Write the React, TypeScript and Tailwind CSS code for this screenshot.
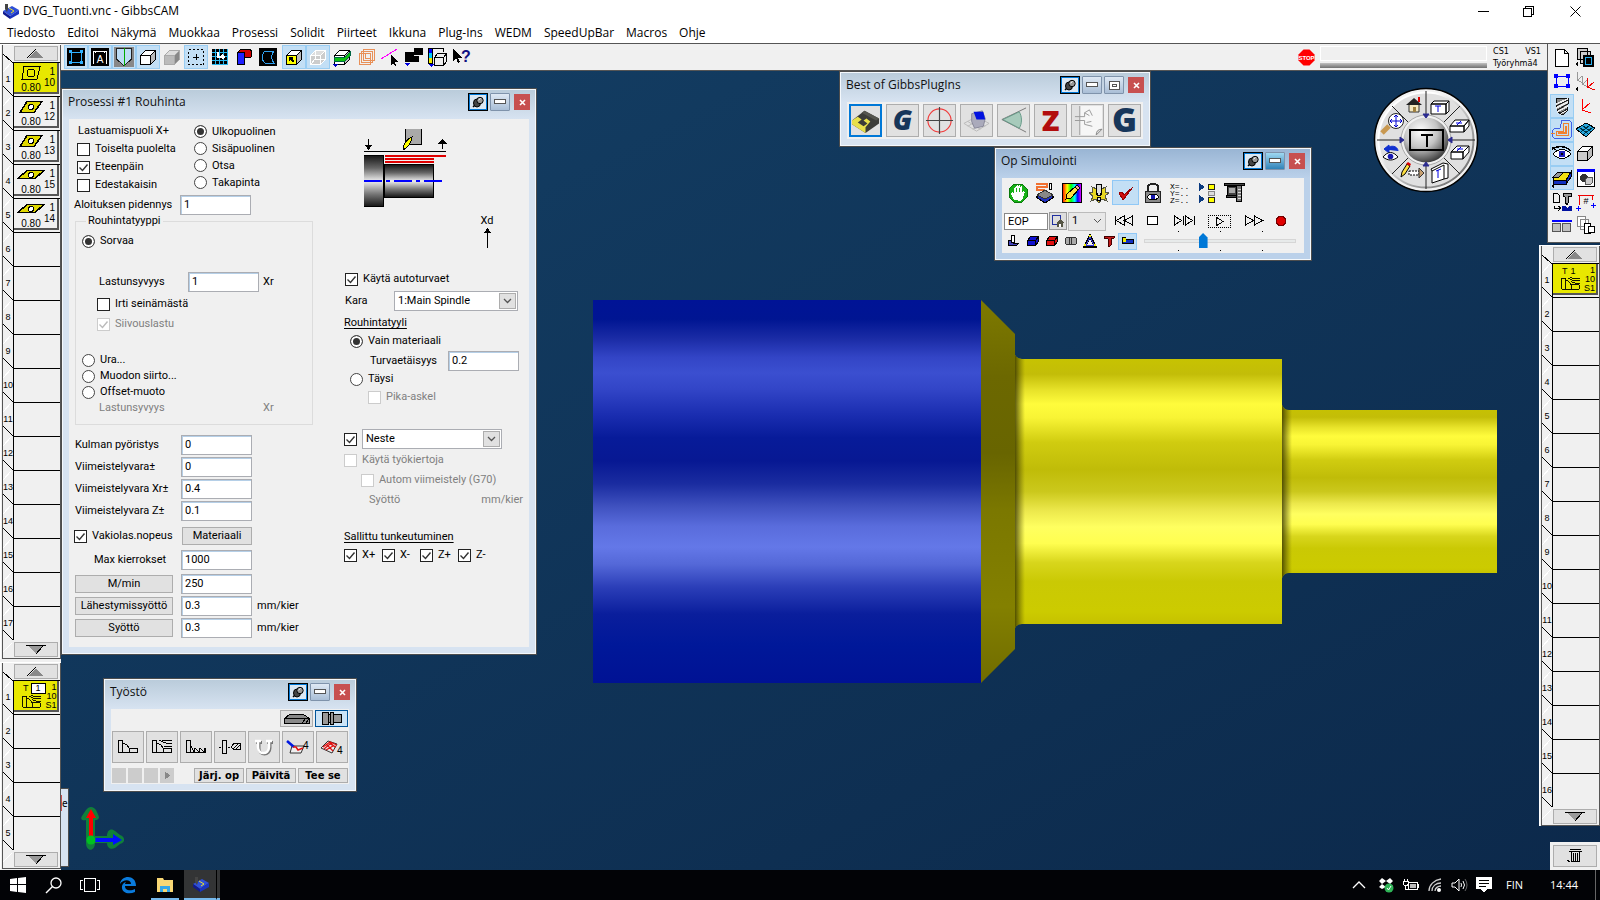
import { ReactNode } from "react";
import clsx from "clsx";

const MENU = [
  "Tiedosto", "Editoi", "Näkymä", "Muokkaa", "Prosessi", "Solidit", "Piirteet",
  "Ikkuna", "Plug-Ins", "WEDM", "SpeedUpBar", "Macros", "Ohje",
];

interface SvgProps {
  w?: number;
  h?: number;
  box?: string;
  smooth?: boolean;
  children: ReactNode;
}

function Svg({ w = 18, h = 18, box, smooth, children }: SvgProps) {
  return (
    <svg
      width={w}
      height={h}
      viewBox={box ?? `0 0 ${w} ${h}`}
      fill="none"
      shapeRendering={smooth ? "auto" : "crispEdges"}
      className="block shrink-0 overflow-visible"
      aria-hidden="true"
    >
      {children}
    </svg>
  );
}

/* ---------- shared drawings ---------- */

function Cube({ front = "#fff", top = "#fff", side = "#bbb", line = "#000" }) {
  return (
    <g stroke={line} strokeLinejoin="round">
      <path d="M1.500 7.500h10v9h-10z" fill={front} />
      <path d="M1.500 7.500l5-5h10l-5 5z" fill={top} />
      <path d="M11.500 7.500l5-5v9l-5 5z" fill={side} />
    </g>
  );
}

function RoughIcon({ w = 22, h = 14 }) {
  return (
    <Svg w={w} h={h} box="0 0 22 14">
      <path d="M1 .5h4V13H1zM5 3c3 0 5 2 6 5h9v5H5M11 8v5M8 1c3 0 3 2 6 2h7M10 0c2 0 3 1 5 1h6M11 4c2 2 3 2 10 2" stroke="#000" />
    </Svg>
  );
}

function GibbsLogo() {
  return (
    <Svg w={16} h={16} smooth>
      <path d="M0 8l9-5 7 4-9 6z" fill="#2f50d8" />
      <path d="M0 8l7 5v3l-7-5z" fill="#101a90" />
      <path d="M7 13l9-6v4l-9 5z" fill="#1a35c0" />
      <path d="M6 5l5 3-3 2" stroke="#e6e030" />
      <path d="M2 1h3v5l-1 3-2-3z" fill="#444" />
    </Svg>
  );
}

/* ---------- form controls ---------- */

interface TickProps {
  label: string;
  checked?: boolean;
  disabled?: boolean;
  className?: string;
}

function Tick({ label, checked, disabled, className }: TickProps) {
  return (
    <label className={clsx("flex items-center gap-[5px] whitespace-nowrap", disabled && "text-[#808080]", className)}>
      <span className="grid size-[13px] shrink-0">
        <input
          type="checkbox"
          defaultChecked={checked}
          disabled={disabled}
          className="peer col-start-1 row-start-1 size-[13px] appearance-none border border-[#222] bg-white disabled:border-[#ccc]"
        />
        <svg viewBox="0 0 13 13" className="pointer-events-none invisible col-start-1 row-start-1 size-[13px] peer-checked:visible" fill="none">
          <path d="M2.500 6.500l3 3 5-6" stroke={disabled ? "#bbb" : "#333"} strokeWidth="1.4" />
        </svg>
      </span>
      {label}
    </label>
  );
}

function Radio({ label, name, checked, className }: { label: string; name: string; checked?: boolean; className?: string }) {
  return (
    <label className={clsx("flex items-center gap-[5px] whitespace-nowrap", className)}>
      <input
        type="radio"
        name={name}
        defaultChecked={checked}
        className="size-[13px] shrink-0 appearance-none rounded-full border border-[#444] bg-white checked:bg-[#333] checked:shadow-[inset_0_0_0_2px_#fff]"
      />
      {label}
    </label>
  );
}

function Field({ id, value }: { id: string; value: string }) {
  return (
    <input
      id={id}
      defaultValue={value}
      className="h-5 w-[71px] shrink-0 border border-[#abadb3] bg-white px-[3px] pb-[2px] shadow-[inset_1px_1px_0_#b5cfe7]"
    />
  );
}

function Select({ label, value, className }: { label: string; value: string; className: string }) {
  return (
    <span className={clsx("grid h-5", className)}>
      <select aria-label={label} className="col-start-1 row-start-1 appearance-none border border-[#abadb3] bg-white pr-5 pl-[3px]">
        <option>{value}</option>
      </select>
      <span className="pointer-events-none col-start-1 row-start-1 mr-[2px] flex h-4 w-[17px] items-center justify-center self-center justify-self-end border border-[#adadad] bg-[#e1e1e1]">
        <Svg w={9} h={6} smooth><path d="M1 1l3.500 3.500L8 1" stroke="#555" strokeWidth="1.300" /></Svg>
      </span>
    </span>
  );
}

function PushButton({ children, className }: { children: ReactNode; className?: string }) {
  return (
    <button className={clsx("flex h-[18px] items-center justify-center border border-[#adadad] bg-[#e1e1e1]", className)}>
      {children}
    </button>
  );
}

/* ---------- floating windows ---------- */

interface WindowProps {
  title: string;
  active?: boolean;
  maximize?: boolean;
  className?: string;
  children: ReactNode;
}

function FloatingWindow({ title, active, maximize, className, children }: WindowProps) {
  const small = "flex h-[18px] w-5 items-center justify-center rounded-[1px] border border-[#7f93ab] bg-linear-to-b";
  const idle = "from-[#dfe9f4] to-[#a9bed6]";
  return (
    <section
      className={clsx(
        "absolute border border-[#4d4d4d] shadow-[inset_0_0_0_1px_#f4f8fc]",
        active ? "bg-linear-to-b from-[#98b4d3] to-[#bbd1ea] to-[30px]" : "bg-linear-to-b from-[#b9cbda] to-[#d7e3f1] to-[30px]",
        className
      )}
    >
      <header className="flex h-[30px] items-center gap-[2px] px-[6px] pb-1">
        <h2 className="flex-1 font-[Open_Sans,sans-serif] text-[12px] text-[#111]">{title}</h2>
        <button aria-label="Kiinnitä" className="flex h-[18px] w-5 items-center justify-center border border-black bg-[#dce8f4] shadow-[inset_0_0_0_1px_#0078d7]">
          <Svg w={12} h={12} smooth>
            <path d="M1 11l3-3" stroke="#000" strokeWidth="1.500" />
            <ellipse cx="5" cy="7" rx="3.500" ry="4" fill="#444" stroke="#000" />
            <circle cx="8" cy="4.500" r="3.200" fill="#999" stroke="#000" />
            <path d="M6.500 4l2-1.500" stroke="#fff" />
          </Svg>
        </button>
        <button aria-label="Pienennä" className={clsx(small, active ? "from-[#9ed8f1] to-[#2f83b8]" : idle)}>
          <Svg w={12} h={6}><path d="M.5.5h11v4H.5z" fill="#fff" stroke="#555" /></Svg>
        </button>
        {maximize && (
          <button aria-label="Suurenna" className={clsx(small, idle)}>
            <Svg w={11} h={9}><path d="M.5.5h10v8H.5z" fill="#fff" stroke="#555" /><path d="M3.500 3.500h4v2h-4z" stroke="#555" /></Svg>
          </button>
        )}
        <button aria-label="Sulje" className="ml-[2px] flex size-4 items-center justify-center bg-[#c75050]">
          <Svg w={7} h={7} smooth><path d="M1 1l5 5M6 1L1 6" stroke="#fff" strokeWidth="1.600" /></Svg>
        </button>
      </header>
      <div className="mx-[7px] mb-[7px] bg-[#f0f0f0]">{children}</div>
    </section>
  );
}

/* ---------- process dialog ---------- */

function TurningDiagram() {
  return (
    <Svg w={82} h={78}>
      <defs>
        <linearGradient id="steel" x1="0" y1="0" x2="0" y2="1">
          <stop offset="0" stopColor="#111" />
          <stop offset=".25" stopColor="#666" />
          <stop offset=".5" stopColor="#eee" />
          <stop offset=".75" stopColor="#777" />
          <stop offset="1" stopColor="#111" />
        </linearGradient>
      </defs>
      <path d="M41.500 0v15.500h16V0" fill="#a9a9a9" stroke="#000" />
      <path d="M39 21c0-6 4-11 9-13 0 4-4 11-9 13z" fill="#ff0" stroke="#000" />
      <path d="M0 22.500h82" stroke="#000" />
      <path d="M4.500 10v8M1.500 16.500h6L4.500 20zM78.500 20v-8M75.500 14h6l-3-3.500z" stroke="#000" fill="#000" />
      <path d="M0 26h20v52H0z" fill="url(#steel)" />
      <path d="M0 26.500h19.500v51H0" stroke="#000" />
      <path d="M20.500 35.500h49v33h-49z" fill="url(#steel)" stroke="#000" />
      <path d="M21 27h61M21 30h49M21 33h49" stroke="#e00000" strokeWidth="2" />
      <path d="M0 52h82" stroke="#00f" strokeWidth="2" strokeDasharray="18 4 4 4" />
    </Svg>
  );
}

const ALLOWANCES = [
  ["Kulman pyöristys", "0"],
  ["Viimeistelyvara±", "0"],
  ["Viimeistelyvara Xr±", "0.4"],
  ["Viimeistelyvara Z±", "0.1"],
];

const FEEDS = [
  ["M/min", "250", ""],
  ["Lähestymissyöttö", "0.3", "mm/kier"],
  ["Syöttö", "0.3", "mm/kier"],
];

function ProcessDialog() {
  return (
    <FloatingWindow title="Prosessi #1 Rouhinta" className="top-[17px] left-0 w-[476px]">
      <form className="flex h-[528px] font-[Roboto,sans-serif] text-[11px] leading-[14px] text-black">
        <div className="w-[275px] px-[5px] pt-[3px]">
          <div className="flex gap-2">
            <div className="w-[108px] pl-[3px]">
              <p className="h-[18px] pl-px leading-[18px]">Lastuamispuoli X+</p>
              <Tick label="Toiselta puolelta" className="h-[18px]" />
              <Tick label="Eteenpäin" checked className="h-[18px]" />
              <Tick label="Edestakaisin" className="h-[18px]" />
            </div>
            <div className="pt-px pl-1">
              <Radio name="side" label="Ulkopuolinen" checked className="h-[17px]" />
              <Radio name="side" label="Sisäpuolinen" className="h-[17px]" />
              <Radio name="side" label="Otsa" className="h-[17px]" />
              <Radio name="side" label="Takapinta" className="h-[17px]" />
            </div>
          </div>
          <div className="mt-px flex items-center">
            <label htmlFor="extension" className="w-[106px]">Aloituksen pidennys</label>
            <Field id="extension" value="1" />
          </div>

          <fieldset className="ml-px w-[238px] border border-[#dcdcdc] pb-2 pl-[6px]">
            <legend className="ml-1 h-3 px-[2px] leading-3">Rouhintatyyppi</legend>
            <Radio name="type" label="Sorvaa" checked className="mt-[6px] h-4" />
            <div className="mt-[23px] flex items-center pl-[17px]">
              <label htmlFor="depth" className="w-[89px]">Lastunsyvyys</label>
              <Field id="depth" value="1" />
              <span className="ml-1">Xr</span>
            </div>
            <Tick label="Irti seinämästä" className="mt-[2px] ml-[15px] h-5" />
            <Tick label="Siivouslastu" checked disabled className="ml-[15px] h-5" />
            <Radio name="type" label="Ura..." className="mt-[18px] h-4" />
            <Radio name="type" label="Muodon siirto..." className="h-4" />
            <Radio name="type" label="Offset-muoto" className="h-4" />
            <div className="flex h-4 items-center pl-[17px] text-[#808080]">
              <span className="w-[164px]">Lastunsyvyys</span>
              <span>Xr</span>
            </div>
          </fieldset>

          <div className="mt-[10px] flex flex-col gap-[2px] pl-px">
            {ALLOWANCES.map(([label, value]) => (
              <div key={label} className="flex items-center">
                <label htmlFor={label} className="w-[106px]">{label}</label>
                <Field id={label} value={value} />
              </div>
            ))}
          </div>
          <div className="mt-[6px] flex items-center justify-between pr-[87px]">
            <Tick label="Vakiolas.nopeus" checked />
            <PushButton className="w-[70px]">Materiaali</PushButton>
          </div>
          <div className="mt-[5px] flex items-center pl-5">
            <label htmlFor="maxrpm" className="w-[87px]">Max kierrokset</label>
            <Field id="maxrpm" value="1000" />
          </div>
          <div className="mt-1 flex flex-col gap-[2px] pl-px">
            {FEEDS.map(([label, value, unit]) => (
              <div key={label} className="flex items-center">
                <PushButton className="mr-2 w-[98px]">{label}</PushButton>
                <input
                  aria-label={label}
                  defaultValue={value}
                  className="h-5 w-[71px] border border-[#abadb3] bg-white px-[3px] pb-[2px] shadow-[inset_1px_1px_0_#b5cfe7]"
                />
                <span className="ml-[5px]">{unit}</span>
              </div>
            ))}
          </div>
        </div>

        <div className="w-[185px] pt-[10px]">
          <div className="pl-5"><TurningDiagram /></div>
          <div className="mt-[7px] flex flex-col items-center pl-[101px]">
            <span>Xd</span>
            <Svg w={9} h={20}><path d="M4.500 20V1M1.500 4.500h6L4.500 1z" stroke="#000" fill="#000" /></Svg>
          </div>
          <Tick label="Käytä autoturvaet" checked className="mt-6 h-[14px] pl-px" />
          <div className="mt-[5px] flex items-center pl-px">
            <span className="w-[49px]">Kara</span>
            <Select label="Kara" value="1:Main Spindle" className="w-[124px]" />
          </div>
          <p className="mt-[5px] h-4 underline underline-offset-2">Rouhintatyyli</p>
          <Radio name="style" label="Vain materiaali" checked className="mt-px ml-[6px] h-4" />
          <div className="mt-[2px] flex items-center pl-[26px]">
            <label htmlFor="clearance" className="w-[78px]">Turvaetäisyys</label>
            <Field id="clearance" value="0.2" />
          </div>
          <Radio name="style" label="Täysi" className="ml-[6px] h-4" />
          <Tick label="Pika-askel" disabled className="mt-[2px] ml-6 h-4" />
          <div className="mt-6 flex items-center">
            <span className="w-[13px] overflow-hidden"><Tick label="" checked /></span>
            <Select label="Neste" value="Neste" className="ml-[5px] w-[140px]" />
          </div>
          <Tick label="Käytä työkiertoja" disabled className="mt-px h-5" />
          <Tick label="Autom viimeistely (G70)" disabled className="ml-[17px] h-5" />
          <div className="flex h-5 items-center justify-between pr-[6px] pl-[25px] text-[#808080]">
            <span>Syöttö</span>
            <span>mm/kier</span>
          </div>
          <p className="mt-5 h-4 underline underline-offset-2">Sallittu tunkeutuminen</p>
          <div className="mt-px flex">
            <Tick label="X+" checked className="h-4 w-[38px]" />
            <Tick label="X-" checked className="h-4 w-[38px]" />
            <Tick label="Z+" checked className="h-4 w-[38px]" />
            <Tick label="Z-" checked className="h-4 w-[38px]" />
          </div>
        </div>
      </form>
    </FloatingWindow>
  );
}

/* ---------- plug-ins, simulation and machining windows ---------- */

const PLUGINS: { name: string; art: ReactNode }[] = [
  {
    name: "Plugin 1",
    art: (
      <>
        <path d="M1 15L14 5l15 8v5l-14 10L1 19z" fill="#3c3c38" />
        <path d="M1 15l6-4 4 3-4 3 6 4 4-3-4-3 3-2 4 3-5 6v6L1 19z" fill="#e8e04a" />
        <path d="M14 5l15 8-3 2-15-8z" fill="#55554e" />
      </>
    ),
  },
  { name: "G", art: <text x="15" y="25" textAnchor="middle" fontFamily="Open Sans" fontSize="29" fontWeight="800" fontStyle="italic" fill="#17365a">G</text> },
  { name: "Center", art: <><circle cx="15" cy="15" r="12" stroke="#f03c3c" strokeWidth="1.200" /><path d="M15 1v28M1 15h28" stroke="#444" strokeWidth="1.200" /></> },
  {
    name: "Grid cube",
    art: (
      <>
        <path d="M2 18l13-7 13 7-13 8zM6 16l13 8M11 13l13 8M24 16l-13 8M19 13L6 21" stroke="#bbb" />
        <path d="M10 8l11-3 3 8-2 8-9 2-3-7z" fill="#aab" stroke="#889" />
        <path d="M12 6h10l2 8h-9z" fill="#0010e0" />
      </>
    ),
  },
  { name: "Angle", art: <><path d="M28 2L3 14l25 13" stroke="#777" /><path d="M4 14l17-8c3 5 3 12 0 17z" fill="#a7cabb" stroke="#698" /></> },
  { name: "Z", art: <text x="15" y="26" textAnchor="middle" fontFamily="Open Sans" fontSize="30" fontWeight="800" fill="#b20d0d">Z</text> },
  {
    name: "Sheet",
    art: (
      <>
        <path d="M7 0h23v24l-6 6H7z" fill="#f6f6f6" />
        <path d="M7 0v30M2 11h10V7l5 3M2 15h10v4l8 2M12 7l5-3 3 6M14 17l5-1" stroke="#999" />
        <path d="M24 30c0-4 2-6 6-6z" fill="#ddd" stroke="#888" />
      </>
    ),
  },
  { name: "Gibbs", art: <text x="15" y="27" textAnchor="middle" fontFamily="Open Sans" fontSize="35" fontWeight="800" fill="#17365a">G</text> },
];

function PluginWindow() {
  return (
    <FloatingWindow title="Best of GibbsPlugIns" maximize className="top-0 left-[778px] w-[312px]">
      <div className="flex gap-1 px-[2px] py-[2px]">
        {PLUGINS.map(({ name, art }, i) => (
          <button
            key={name}
            aria-label={name}
            className={clsx(
              "flex size-[33px] items-center justify-center bg-[#e1e1e1]",
              i === 0 ? "border-2 border-[#0078d7]" : "border border-[#adadad]"
            )}
          >
            <Svg w={29} h={29} box="0 0 30 30" smooth>{art}</Svg>
          </button>
        ))}
      </div>
    </FloatingWindow>
  );
}

const SIM_TOOLS: ReactNode[] = [
  <>
    <path d="M6 1h8l5 5v8l-5 5H6l-5-5V6z" fill="#18b018" stroke="#0a7a0a" />
    <path d="M6 17l-3-6 1-2 2 2V5l1-1 1 1v4V3l1-1 1 1v6V3l1-1 1 1v6V4l1-1 1 1v7l1-3 2 1-2 6-2 3z" fill="#fff" />
    <path d="M8.500 5v4M11.500 5v4M14.500 5v4" stroke="#18b018" />
  </>,
  <>
    <path d="M1 1h11v3H2v3h8" stroke="#f07030" strokeWidth="1.500" />
    <path d="M14.500.5h2v6h-2z" fill="#fff" stroke="#000" />
    <path d="M1 14l9-4 9 4-9 6z" fill="#2030c0" stroke="#000" />
    <path d="M2 12l8-5 8 5-8 4z" fill="#888" stroke="#333" />
  </>,
  <>
    <defs>
      <linearGradient id="rainbow">
        <stop offset="0" stopColor="#f00" /><stop offset=".25" stopColor="#ff0" /><stop offset=".45" stopColor="#0f0" />
        <stop offset=".65" stopColor="#0ff" /><stop offset=".8" stopColor="#00f" /><stop offset="1" stopColor="#f0f" />
      </linearGradient>
    </defs>
    <path d="M.5.5h19v19H.5z" fill="url(#rainbow)" stroke="#000" />
    <path d="M4 16l1-5 9-8 3 3-8 9z" fill="#ffe040" stroke="#000" />
    <path d="M13 4l2-2 3 3-2 2z" fill="#f8a0a0" stroke="#000" />
  </>,
  <>
    <path d="M10 2l2 4 5-2-1 5 4 1-4 3 2 5-5-2-3 4-3-4-5 2 2-5-4-3 4-1-1-5 5 2z" fill="#e8d820" stroke="#554" />
    <path d="M7.500 1.500h5v8l-1 3h-3l-1-3zM8.500 14.500h3v3h-3z" fill="#ddd" stroke="#000" strokeWidth="1.500" />
  </>,
  <><path d="M3 10l4 7L17 4l-9 8-2-3z" fill="#d01010" stroke="#900" /></>,
  <>
    <path d="M5 8V4c0-4 10-4 10 0v4" stroke="#222" strokeWidth="2" />
    <path d="M2.500 8.500h15v11h-15z" fill="#888" stroke="#222" />
    <path d="M4 14c3-4 9-4 12 0-3 4-9 4-12 0z" fill="#fff" stroke="#000" /><circle cx="10" cy="14" r="2.200" fill="#1818b0" />
  </>,
  <>
    <g fontFamily="Liberation Mono" fontSize="8" fill="#000">
      <text x="0" y="6">X=..</text><text x="0" y="13">Y=..</text><text x="0" y="20">Z=..</text>
    </g>
  </>,
  <>
    <path d="M2 0l6 4-6 4zM2 12l6 4-6 4z" fill="#0a3a80" />
    <path d="M11.500 1.500h6v5h-6zM11.500 14.500h6v5h-6z" fill="#ff0" stroke="#222" />
    <path d="M11.500 8.500h6v4h-6z" fill="#ddd" stroke="#888" />
  </>,
  <>
    <path d="M0 .5h20v2H0zM3 3h10v9H3zM2 12h11v2H2z" fill="#444" stroke="#000" />
    <path d="M5 5h6v5H5z" fill="#aaa" />
    <path d="M12.500 2.500h5v16h-5z" fill="#777" stroke="#000" /><path d="M14 6h3M14 9h3M14 12h3M14 15h3" stroke="#ddd" />
  </>,
];

const SIM_PARTS: ReactNode[] = [
  <><path d="M0 6l5-1v3h6l-3 3-8-1z" fill="#44b" stroke="#000" /><path d="M3.500.5h3v7h-3z" fill="#fff" stroke="#000" /></>,
  <><path d="M.5 5.500l3-4h8v5l-3 4h-8z" fill="#1010d0" stroke="#000" /><path d="M.5 5.500h8l3-4M8.500 5.500v5" stroke="#000" /></>,
  <><path d="M.5 5.500l3-4h8v5l-3 4h-8z" fill="#e01010" stroke="#000" /><path d="M.5 5.500h8l3-4M8.500 5.500v5" stroke="#000" /></>,
  <><circle cx="4" cy="6" r="4" fill="#aaa" stroke="#333" /><circle cx="8" cy="6" r="4" fill="#aaa" stroke="#333" /><path d="M6.500 3v6" stroke="#333" /></>,
  <><path d="M6 1L1 11h10z" stroke="#000" strokeWidth="3" /><path d="M6 2L2 10h8z" stroke="#3838e0" /><path d="M5 0h2v2H5zM0 9h2v2H0zM10 9h2v2h-2z" fill="#ee0" /></>,
  <><path d="M1 1h10v2l-3 1v6l-2 2-1-2V4L1 3z" fill="#c01818" stroke="#400" /></>,
  <><path d="M.5 2.500h3v2h8v4H.5z" fill="#1030c0" stroke="#000" /><path d="M.5 2.500h3v4h-3z" fill="#ee0" /></>,
];

const TRANSPORT: { name: string; w: number; art: ReactNode }[] = [
  { name: "Alkuun", w: 20, art: <path d="M1.500 1v9M10 1v9L2 5.500zM18.500 1v9l-8-4.500z" /> },
  { name: "Seis", w: 12, art: <path d="M.5 1.500h10v8H.5z" fill="#fff" /> },
  { name: "Seuraava", w: 22, art: <path d="M1.500 1v9l7-4.500zM10.500 1v9M12.500 1v9l7-4.500zM21.500 1v9" /> },
];

function SpeedTicks() {
  return (
    <div className="flex gap-[41px] pl-[34px]">
      <i className="h-px w-px bg-black" />
      <i className="h-px w-px bg-black" />
      <i className="h-px w-px bg-black" />
    </div>
  );
}

function SimulationWindow() {
  return (
    <FloatingWindow title="Op Simulointi" active className="top-[76px] left-[933px] w-[318px]">
      <div className="h-[75px] px-[2px] pt-[2px]">
        <div className="flex">
          {SIM_TOOLS.map((art, i) => (
            <button key={i} aria-label={`Simulointi ${i + 1}`} className={clsx("flex h-[25px] w-[27px] items-center justify-center", i === 4 && "border border-[#90c8f6] bg-[#c3dff5]")}>
              <Svg w={20} h={20}>{art}</Svg>
            </button>
          ))}
        </div>
        <div className="mt-[7px] flex h-[18px] items-center font-[Roboto,sans-serif] text-[11px] text-black">
          <input aria-label="Pysäytys" defaultValue="EOP" className="h-[17px] w-11 border border-[#888] bg-white px-[3px]" />
          <button aria-label="Koti" className="ml-px flex size-[18px] items-center justify-center border border-[#999] bg-[#ddd]">
            <Svg w={12} h={12}><path d="M.5.5h8v9h-8z" stroke="#2030a0" /><path d="M4 8l4-4 4 4h-1v4H5V8z" fill="#554" /><path d="M7 9h2v3H7z" fill="#fff" /></Svg>
          </button>
          <span className="ml-px grid h-[18px] w-[38px]">
            <select aria-label="Kanava" className="col-start-1 row-start-1 appearance-none border border-[#bbb] bg-[#e8e8e8] pl-[3px]">
              <option>1</option>
            </select>
            <span className="pointer-events-none col-start-1 row-start-1 mr-1 self-center justify-self-end">
              <Svg w={9} h={6} smooth><path d="M1 1l3.500 3.500L8 1" stroke="#555" /></Svg>
            </span>
          </span>
          <div className="ml-2 flex flex-1 items-center justify-between pr-4">
            {TRANSPORT.map(({ name, w, art }) => (
              <button key={name} aria-label={name}><Svg w={w} h={12}><g stroke="#000">{art}</g></Svg></button>
            ))}
            <button aria-label="Toista" className="flex h-[13px] w-[23px] items-center justify-center border border-dotted border-black">
              <Svg w={9} h={11}><path d="M1 1v9l7-4.500z" stroke="#000" /></Svg>
            </button>
            <button aria-label="Nopeasti"><Svg w={18} h={12}><path d="M.5 1v9l8-4.500zM9.500 1v9l8-4.500z" stroke="#000" /></Svg></button>
            <button aria-label="Nauhoita"><Svg w={10} h={10}><path d="M3 .5h4L9.500 3v4L7 9.500H3L.5 7V3z" fill="#e00000" stroke="#700" /></Svg></button>
          </div>
        </div>
        <div className="mt-px flex items-center">
          {SIM_PARTS.map((art, i) => (
            <button key={i} aria-label={`Osa ${i + 1}`} className={clsx("flex h-[17px] w-[19px] items-center justify-center", i === 6 && "border border-[#90c8f6] bg-[#c3dff5]")}>
              <Svg w={12} h={12}>{art}</Svg>
            </button>
          ))}
          <div className="ml-[7px] flex-1 pr-[6px]">
            <SpeedTicks />
            <input
              type="range"
              aria-label="Nopeus"
              defaultValue={38}
              className="my-px block h-4 w-full appearance-none bg-transparent [&::-webkit-slider-runnable-track]:h-[4px] [&::-webkit-slider-runnable-track]:border [&::-webkit-slider-runnable-track]:border-[#d6d6d6] [&::-webkit-slider-runnable-track]:bg-[#e7eaea] [&::-webkit-slider-thumb]:mt-[-7px] [&::-webkit-slider-thumb]:h-[15px] [&::-webkit-slider-thumb]:w-[9px] [&::-webkit-slider-thumb]:appearance-none [&::-webkit-slider-thumb]:bg-[#0078d7] [&::-webkit-slider-thumb]:[clip-path:polygon(50%_0,100%_30%,100%_100%,0_100%,0_30%)]"
            />
            <SpeedTicks />
          </div>
        </div>
      </div>
    </FloatingWindow>
  );
}

const OPERATIONS: ReactNode[] = [
  <path d="M1.500 1.500h4v12h-4zM5.500 4.500c4 0 5 2 7 5h8v4h-15M12.500 10v4" stroke="#000" />,
  <path d="M1.500 1.500h4v12h-4zM5.500 4.500c4 0 5 2 7 5h8v4h-15M12.500 10v4M8 1c3 1 4 3 7 3h6M11 1.500h10M13 7.500h8" stroke="#000" />,
  <path d="M1.500 1.500h4v12h-4zM5 5l4 8 1-4 4 4 1-4 4 4 1-4v4.500H5" stroke="#000" />,
  <path d="M3.500 1.500h4v13h-4zM0 8h2M9 8h2M12 8l3-3.500h6v6h-6zM15 9l4-4M17 10l4-4" stroke="#000" />,
  <><path d="M6 3v6c0 8 11 8 11 0V3M3 3.500h6M14 3.500h6" stroke="#777" strokeWidth="3" /><path d="M5 2v6c0 8 11 8 11 0V2M2 2h6M13 2h6" stroke="#fff" strokeWidth="2.500" /></>,
  <><path d="M3 14l2-7h12l-3 7z" fill="#eee" stroke="#333" /><path d="M0 2l7 6" stroke="#0018e0" strokeWidth="2.500" /><path d="M6 8l3 0 2 3 5-2" stroke="#e01010" strokeWidth="1.500" /><text x="16" y="10" fontFamily="Roboto" fontSize="10" fill="#000">4</text></>,
  <><path d="M0 9l7-7 9 3-5 9z" fill="#eee" stroke="#333" /><path d="M2 8l7-5 7 3M3 10l6-5 6 3M5 11l7-4M5 5l7 7M8 3l6 5" stroke="#e01010" strokeWidth="1.300" /><text x="16" y="15" fontFamily="Roboto" fontSize="10" fill="#000">4</text></>,
];

function MachiningWindow() {
  return (
    <FloatingWindow title="Työstö" className="top-[607px] left-[42px] w-[254px]">
      <div className="p-px">
        <div className="flex justify-end gap-[2px]">
          <button aria-label="Jyrsintä" className="flex h-[17px] w-[33px] items-center justify-center border border-[#adadad] bg-[#e1e1e1]">
            <Svg w={26} h={11}><path d="M.5 5.500l5-4h14l6 4v5H.5zM1 5.500h24M18 10l4-5M22 10l3-4" fill="#888" stroke="#000" /></Svg>
          </button>
          <button aria-label="Sorvaus" className="flex h-[17px] w-[33px] items-center justify-center border border-[#005499] bg-[#cce4f7]">
            <Svg w={20} h={13}><path d="M.5.5h6v12h-6zM6.500 2.500h2v8h-2zM8.500.5h3v12h-3zM11.500 2.500h8v8h-8z" fill="#999" stroke="#000" /></Svg>
          </button>
        </div>
        <div className="mt-1 flex gap-[2px]">
          {OPERATIONS.map((art, i) => (
            <button key={i} aria-label={`Työstö ${i + 1}`} className="flex size-8 items-center justify-center border border-[#adadad] bg-[#e1e1e1]">
              <Svg w={22} h={16} smooth={i > 3}>{art}</Svg>
            </button>
          ))}
        </div>
        <div className="mt-[5px] flex h-[15px] gap-[2px]">
          <i className="w-[14px] bg-[#ccc]" />
          <i className="w-[14px] bg-[#ccc]" />
          <i className="w-[14px] bg-[#ccc]" />
          <button aria-label="Seuraava" className="flex w-[14px] items-center justify-center bg-[#ccc]">
            <Svg w={6} h={9}><path d="M.5 0v9L6 4.500z" fill="#888" /></Svg>
          </button>
          <div className="flex flex-1 justify-end gap-[2px] font-[DejaVu_Sans,sans-serif] text-[10px] font-bold text-black">
            {["Järj. op", "Päivitä", "Tee se"].map((t) => (
              <button key={t} className="w-[50px] border border-[#adadad] bg-[#e1e1e1] leading-[12px] whitespace-nowrap">{t}</button>
            ))}
          </div>
        </div>
      </div>
    </FloatingWindow>
  );
}

/* ---------- tile lists on both edges ---------- */

interface PaletteProps {
  count: number;
  tiles: ReactNode[];
  activeCount: number;
}

function Palette({ count, tiles, activeCount }: PaletteProps) {
  return (
    <div className="w-[61px] border-t border-l border-white bg-[#f0f0f0] pl-px">
      <div className="border-r border-b border-l border-[#555] pb-px">
        <div className="flex h-[17px] items-start pt-px">
          <Svg w={11} h={16}><path d="M0 8l9 8h2" stroke="#000" /></Svg>
          <button aria-label="Ylös" className="flex h-[15px] w-11 items-center justify-center border border-[#adadad] bg-[#e1e1e1]">
            <Svg w={20} h={10}><path d="M3 9l7-8 7 8z" fill="#888" /><path d="M1 9l9-9" stroke="#000" /></Svg>
          </button>
        </div>
        {Array.from({ length: count }, (_, i) => (
          <div key={i} className="flex h-[34px]">
            <div className="grid w-[10px]">
              <svg viewBox="0 0 10 34" className="col-start-1 row-start-1" fill="none" shapeRendering="crispEdges" aria-hidden="true">
                <path d="M0 10l8-9" stroke="#fff" />
                <path d="M0 24l9 9h1" stroke="#000" />
              </svg>
              <span className="col-start-1 row-start-1 self-center text-center font-[Liberation_Sans,sans-serif] text-[9px] leading-none text-black">{i + 1}</span>
            </div>
            <div className={clsx("w-[47px] border-t border-l border-black", i < tiles.length && "pr-px pb-[2px]")}>
              {i < tiles.length && (
                <div className={clsx("h-full border-r-2 border-b-2 border-[#555]", i < activeCount ? "bg-[#e8e800]" : "bg-[#f0f0f0]")}>{tiles[i]}</div>
              )}
            </div>
          </div>
        ))}
        <div className="flex h-[17px] items-start pt-[2px]">
          <Svg w={11} h={15}><path d="M0 10l9-9" stroke="#fff" /></Svg>
          <button aria-label="Alas" className="flex h-[15px] w-11 items-center justify-center border border-[#adadad] bg-[#e1e1e1]">
            <Svg w={20} h={10}><path d="M3 1l7 8 7-8z" fill="#999" /><path d="M0 .5h20M10 9l7-8" stroke="#000" /></Svg>
          </button>
        </div>
      </div>
    </div>
  );
}

function InsertTile({ shape, id }: { shape: number; id: string }) {
  return (
    <div className="flex h-full justify-between pr-[2px] pl-1 font-[Liberation_Sans,sans-serif] text-[10px] leading-[11px] text-black">
      <div className="flex flex-col items-center">
        <Svg w={26} h={19}>
          {shape === 0 && <path d="M6 3.500h16l-3 13H4z" stroke="#000" />}
          {shape === 1 && <path d="M9 4.500h15l-8 11H2z" fill="#e0d800" stroke="#000" strokeWidth="1.500" />}
          {shape === 2 && <path d="M9 5.500h17l-9 8H0z" fill="#e0d800" stroke="#000" strokeWidth="1.500" />}
          <circle cx="13" cy={10} r={shape === 0 ? 4 : 2.500} fill={shape === 0 ? "none" : "#fff"} stroke="#000" />
        </Svg>
        0.80
      </div>
      <div className="pt-[3px] text-right">
        <div>1</div>
        <div>{id}</div>
      </div>
    </div>
  );
}

function OperationTile({ boxed }: { boxed?: boolean }) {
  return (
    <div className="flex h-full justify-between pr-px pl-2 font-[Liberation_Sans,sans-serif] text-[9px] leading-[9px] text-black">
      <div className="flex flex-col justify-center gap-px">
        <div className="flex items-center gap-[2px] pl-px">
          <span>T</span>
          <span className={clsx(boxed ? "border border-black bg-white px-1" : "pl-px")}>1</span>
        </div>
        <RoughIcon w={20} h={14} />
      </div>
      <div className="pt-[2px] text-right">
        <div>1</div><div>10</div><div>S1</div>
      </div>
    </div>
  );
}

/* ---------- top toolbar ---------- */

const VIEW_TOOLS: { on?: boolean; gap?: boolean; art: ReactNode }[] = [
  { on: true, art: <><path d="M0 0h18v18H0z" fill="#000" /><path d="M4 4h10v10H4z" stroke="#30b0ff" /><path d="M2 2h3v3H2zM13 2h3v3h-3zM2 13h3v3H2zM13 13h3v3h-3z" fill="#30b0ff" /></> },
  { on: true, art: <><path d="M0 0h18v18H0z" fill="#000" /><path d="M2.500 16V3.500h13V16M3 3l2 2M15 3l-2 2" stroke="#fff" /><text x="9" y="15" textAnchor="middle" fontFamily="Liberation Sans" fontSize="10" fill="#fff">A</text></> },
  { on: true, art: <><path d="M-1-1h20v20H-1z" fill="#888" /><path d="M1.500 0v11L9 18l7.500-7V0z" fill="#bcdcf5" stroke="#222" /><path d="M9 0v18" stroke="#0a0" /></> },
  { on: true, art: <Cube /> },
  { art: <Cube front="#bbb" top="#ddd" side="#888" line="#aaa" /> },
  { on: true, art: <><path d="M1.500 1.500h15v15h-15z" stroke="#000" strokeDasharray="2 2" /><path d="M9 6v6M6 9h6" stroke="#000" /></> },
  { art: <><path d="M1 1h16v16H1z" fill="#000" /><path d="M1 4h16M1 8h16M1 12h16M1 16h16M4 1v16M8 1v16M12 1v16M16 1v16" stroke="#28b8f0" /><path d="M7 4v5h6M11 7l2 2-2 2" stroke="#fff" strokeWidth="1.500" /></> },
  { art: <><path d="M2.500 4.500h7v12h-7z" fill="#2020ff" stroke="#000" /><path d="M2.500 4.500l3-3h9c3 0 3 8 0 8H9V4.500z" fill="#d00000" stroke="#000" /></> },
  { art: <><path d="M0 0h18v18H0z" fill="#000" /><path d="M15 3H7c-4 1-5 9-1 12h9c-3-3-3-9 0-12z" stroke="#30a0f0" /></> },
  { on: true, gap: true, art: <><Cube front="#ff0" /><path d="M9 14L5 10M4.500 13v-3h3" stroke="#000" strokeWidth="1.500" /></> },
  { on: true, art: <><Cube front="#ccc" top="#ddd" side="#ccc" line="#fff" /><path d="M6 2v9h10M6 11l-4 5" stroke="#fff" /></> },
  { art: <><Cube /><path d="M1 9h11l5-5v4l-5 5H1z" fill="#10c010" stroke="#064" /><path d="M-1 16h6l-3 3z" fill="#0000c0" /></> },
  { art: <path d="M6.500 1.500h11v11h-11zM4.500 3.500h11v11h-11zM2.500 5.500h11v11h-11zM8.500 5.500h5v5h-5z" stroke="#e89058" /> },
  { art: <><path d="M0 11L16 1" stroke="#f0f" /><path d="M10 7v10l2-2 2 3 1-1-1-3h3z" fill="#000" /></> },
  { art: <><path d="M9 0h9v7H9zM0 4h9v4h5v6H0z" fill="#000" /><path d="M-1 15h6l-3 3z" fill="#0000e0" /></> },
  { art: <><path d="M0 0h3v5H0z" fill="#00f" /><path d="M0 5h3v5H0z" fill="#0cf" /><path d="M0 10h3v5H0z" fill="#ee0" /><path d="M-.5 0v15.500h4V0zM3 .5h11v3" stroke="#000" /><path d="M5.500 9.500l3-4h9l-3 4zM5.500 9.500h9v8h-9zM14.500 9.500l3-4v8l-3 4" fill="#eee" stroke="#000" /><path d="M-1 16h6l-3 3z" fill="#0000e0" /></> },
  { art: <><path d="M0 1v12l3-3 2 5 2-1-2-4h4z" fill="#000" /><text x="8" y="14" fontFamily="Liberation Sans" fontSize="16" fontWeight="700" fill="#101080">?</text></> },
];

function TopToolbar() {
  return (
    <div className="flex h-[27px] items-center border-b border-[#555] bg-[#f0f0f0] pl-[3px]">
      {VIEW_TOOLS.map(({ on, gap, art }, i) => (
        <button
          key={i}
          aria-label={`Näkymätyökalu ${i + 1}`}
          className={clsx("flex h-6 w-6 items-center justify-center border", on ? "border-[#99cdf3] bg-[#c3dff5]" : "border-transparent", gap && "ml-[2px]")}
        >
          <Svg>{art}</Svg>
        </button>
      ))}
      <div className="ml-auto flex items-center">
        <Svg w={17} h={17} smooth>
          <path d="M5.500.5h6l5 5v6l-5 5h-6l-5-5v-6z" fill="#f00" />
          <text x="8.500" y="11" textAnchor="middle" fontFamily="Liberation Sans" fontSize="6" fontWeight="700" fill="#fff">STOP</text>
        </Svg>
        <div className="ml-[5px] w-[167px]">
          <div className="h-[15px] border border-white" />
          <div className="mt-[2px] h-[5px] bg-linear-to-b from-[#c0c0c0] to-[#707070]" />
        </div>
        <div className="ml-[6px] w-[54px] font-[DejaVu_Sans_Condensed,DejaVu_Sans,sans-serif] text-[9px] leading-3 text-black">
          <div className="flex justify-between pr-[6px]"><span>CS1</span><span>VS1</span></div>
          <div>Työryhmä4</div>
        </div>
      </div>
    </div>
  );
}

/* ---------- right tool grid ---------- */

const MAIN_TOOLS: { on?: boolean; art: ReactNode }[] = [
  { art: <path d="M3.500 1.500h9l4 4v13h-13zM12.500 1.500v4h4" fill="#fff" stroke="#000" /> },
  { art: <><path d="M1.500.5h10v11h-10zM4.500 3.500h10v12h-10z" fill="#ccc" stroke="#000" /><path d="M7 7h11v12H7z" fill="#000" /><path d="M9.500 9.500h6v7h-6z" stroke="#28b0f0" /><path d="M-1 16l3-3v6z" fill="#000" /></> },
  { art: <><path d="M4 4h12v10H4z" stroke="#00f" /><path d="M2 2h4v4H2zM14 2h4v4h-4zM2 12h4v4H2zM14 12h4v4h-4z" fill="#00f" /></> },
  { art: <><path d="M1.500 0v8l5 3M2 8l4-4M6.500 4v8l5 3M7 12l4-4" stroke="#999" /><path d="M11.500 6v9l7 3M12 15l6-5" stroke="#e00" /><path d="M-1 17l3-3v6z" fill="#000" /></> },
  { on: true, art: <><path d="M4 2h12v6l-1 7-4 4-5-3-2-6z" fill="#888" stroke="#111" /><path d="M4 8l12-5M4 12l12-6M5 16l11-6M8 18l7-4" stroke="#eee" strokeWidth="1.500" /><path d="M4 10l12-6M5 14l11-6M7 18l8-5" stroke="#222" /></> },
  { art: <path d="M6 3v11l9 3M6 14l8-7" stroke="#f00" /> },
  { on: true, art: <><path d="M9.500.5h8l2 2v14l-2 2h-15l-2-2v-6l2-2h5l1-1z" stroke="#4060e8" /><path d="M11.500 3.500h5v12h-12v-4h7zM14 6v7H6M-1 13.500h4" stroke="#f08030" strokeWidth="1.500" /></> },
  { art: <><path d="M0 9l10-6 9 5-9 9z" fill="#28a8e0" stroke="#000" /><path d="M3 7l9 7M6 5l9 7M5 12l9-7M8 14l9-7" stroke="#034" /></> },
  { on: true, art: <><path d="M1 10c5-6 12-6 18 0-6 6-12 6-18 0z" fill="#fff" stroke="#000" /><circle cx="10" cy="10" r="3.500" fill="#2020c0" /><circle cx="10" cy="10" r="1.500" fill="#000" /><path d="M0 5c5-3 13-4 19 2M1 3l2 3" stroke="#000" strokeWidth="1.500" /></> },
  { art: <Cube side="#bbb" front="#ccc" /> },
  { on: true, art: <><path d="M1 9L6 4h13l-5 8H1z" fill="#f0e010" stroke="#000" /><path d="M1 9l5-5h6l-5 5z" fill="#999" stroke="#000" /><path d="M1 12h13v4H1z" fill="#1030c0" stroke="#000" /><path d="M14 12l5-8v5l-5 7z" fill="#1030c0" stroke="#000" /><path d="M-1 18l3-3v6z" fill="#000" /></> },
  { art: <><path d="M1.500 2.500h17v16h-17z" stroke="#000" fill="#fff" /><path d="M1 1h18v3H1z" fill="#00f" /><circle cx="8" cy="10" r="4" fill="#333" /><path d="M9.500 11.500l2-2h5v5l-2 2h-5z" fill="#ccc" stroke="#555" /></> },
  { art: <><path d="M1.500 1.500h4l2 2v7h-6zM2 14v2h6M6 14l3 2-3 3" stroke="#000" fill="none" /><path d="M11 1.500h8v3h-2l-1 7-1 1-1-1-1-7h-2z" fill="#999" stroke="#000" /><path d="M10 14h3l2 2 2-2h3v5H10z" fill="#0010a0" /></> },
  { art: <><path d="M3.500 13V3.500h13V8M2 3h3M15 3h3" stroke="#e00" /><text x="10" y="12" textAnchor="middle" fontFamily="Liberation Sans" fontSize="9" fill="#000">#</text><path d="M0 16h5M2.500 14v5M15 13h5M17.500 11v5" stroke="#00f" /></> },
  { art: <><path d="M0 4h20v2H0z" fill="#00f" /><path d="M.5 7.500h8v8h-8zM10.500 7.500h8v8h-8z" fill="#c0c0c0" stroke="#555" /></> },
  { art: <><path d="M1.500.5h8v10h-8zM4.500 3.500h8v10h-8z" fill="#fff" stroke="#888" /><path d="M8.500 7.500h6v10h-6z" fill="#fff" stroke="#000" /><path d="M12.500 10.500h6v6h-6z" fill="#fff" stroke="#000" /></> },
];

function MainTools() {
  return (
    <div className="grid w-[53px] grid-cols-2 border-b border-l border-[#555] bg-[#f0f0f0] pt-[2px] pr-[2px] pb-1 pl-[2px]">
      {MAIN_TOOLS.map(({ on, art }, i) => (
        <button key={i} aria-label={`Päätyökalu ${i + 1}`} className={clsx("flex size-6 items-center justify-center border", on ? "border-[#99cdf3] bg-[#c3dff5]" : "border-transparent")}>
          <Svg w={20} h={20}>{art}</Svg>
        </button>
      ))}
    </div>
  );
}

/* ---------- canvas ---------- */

function TurnedPart() {
  return (
    <svg viewBox="0 0 904 383" className="absolute top-[229px] left-[532px] w-[904px]" role="img" aria-label="Sorvattu kappale">
      <defs>
        <linearGradient id="blue" x1="0" y1="0" x2="0" y2="1">
          <stop offset="0" stopColor="#001396" />
          <stop offset=".05" stopColor="#001592" />
          <stop offset=".1" stopColor="#1a2ba5" />
          <stop offset=".15" stopColor="#3345c6" />
          <stop offset=".19" stopColor="#3b4fd0" />
          <stop offset=".23" stopColor="#3346c8" />
          <stop offset=".3" stopColor="#1a2db0" />
          <stop offset=".36" stopColor="#071b99" />
          <stop offset=".42" stopColor="#071893" />
          <stop offset=".48" stopColor="#1a2ca0" />
          <stop offset=".54" stopColor="#4052c0" />
          <stop offset=".59" stopColor="#596cdc" />
          <stop offset=".645" stopColor="#6478e8" />
          <stop offset=".69" stopColor="#5468d8" />
          <stop offset=".75" stopColor="#2b3eb8" />
          <stop offset=".82" stopColor="#0a1e9c" />
          <stop offset=".9" stopColor="#001899" />
          <stop offset="1" stopColor="#001294" />
        </linearGradient>
        <linearGradient id="yellow" x1="0" y1="0" x2="0" y2="1">
          <stop offset="0" stopColor="#c8c400" />
          <stop offset=".07" stopColor="#c3bd08" />
          <stop offset=".13" stopColor="#e8e32a" />
          <stop offset=".18" stopColor="#fffc3c" />
          <stop offset=".23" stopColor="#f8f435" />
          <stop offset=".32" stopColor="#d0cc10" />
          <stop offset=".42" stopColor="#c0bc08" />
          <stop offset=".5" stopColor="#cbc81c" />
          <stop offset=".57" stopColor="#ece84c" />
          <stop offset=".63" stopColor="#ffff60" />
          <stop offset=".69" stopColor="#fffe50" />
          <stop offset=".76" stopColor="#d8d61c" />
          <stop offset=".83" stopColor="#cac904" />
          <stop offset=".94" stopColor="#cccb00" />
          <stop offset="1" stopColor="#c3be00" />
        </linearGradient>
        <linearGradient id="olive" x1="0" y1="0" x2="0" y2="1">
          <stop offset="0" stopColor="#7e7a00" />
          <stop offset=".2" stopColor="#6c6800" />
          <stop offset=".4" stopColor="#686500" />
          <stop offset=".55" stopColor="#7b7800" />
          <stop offset=".8" stopColor="#838000" />
          <stop offset="1" stopColor="#706c00" />
        </linearGradient>
        <linearGradient id="fillet">
          <stop offset="0" stopColor="#2a2800" stopOpacity=".75" />
          <stop offset="1" stopColor="#555000" stopOpacity="0" />
        </linearGradient>
      </defs>
      <path d="M0 0h388v383H0z" fill="url(#blue)" />
      <path d="M388 0l34 34v315l-34 34z" fill="url(#olive)" />
      <path d="M422 55q2 4 7 4h260v265H429q-5 0-7 4z" fill="url(#yellow)" />
      <path d="M422 55q2 4 7 4h3v265h-3q-5 0-7 4z" fill="url(#fillet)" />
      <path d="M689 105q2 5 7 5h208v163H696q-5 0-7 5z" fill="url(#yellow)" />
      <path d="M689 105q2 5 7 5h3v163h-3q-5 0-7 5z" fill="url(#fillet)" />
    </svg>
  );
}

function ViewWheel() {
  return (
    <svg viewBox="0 0 106 106" className="absolute top-4 left-[1312px] size-[106px]" fill="none" role="img" aria-label="Näkymäpyörä">
      <defs>
        <radialGradient id="ball" cx=".38" cy=".3" r=".75">
          <stop offset="0" stopColor="#fff" />
          <stop offset=".5" stopColor="#c4c4c4" />
          <stop offset="1" stopColor="#333" />
        </radialGradient>
        <linearGradient id="rim" x1="0" y1="0" x2="1" y2="1">
          <stop offset=".3" stopColor="#fff" />
          <stop offset="1" stopColor="#555" />
        </linearGradient>
      </defs>
      <circle cx="53" cy="53" r="51.500" fill="#f2f2f2" stroke="#000" strokeWidth="1.500" />
      <circle cx="53" cy="53" r="47.500" fill="#e0e0e0" stroke="url(#rim)" strokeWidth="2" />
      <path d="M53 4v98M4 53h98M19 19l68 68M87 19L19 87" stroke="#222" />
      <circle cx="53" cy="53" r="25" fill="#f0f0f0" stroke="#aaa" />
      <circle cx="53" cy="53" r="22.500" fill="url(#ball)" />
      <path d="M50 27h6l-3 4zM50 79h6l-3-4zM27 50v6l4-3zM79 50v6l-4-3z" fill="#2a2a90" stroke="#2a2a90" />
      <path d="M37 43h33v20H37z" stroke="#000" strokeWidth="2" />
      <path d="M48 48h12M54 48v12" stroke="#000" strokeWidth="2" />
      {/* home */}
      <path d="M36 17h10v8H36z" fill="#f4e8c0" stroke="#333" />
      <path d="M33 18l8-7 8 7z" fill="#222" />
      <path d="M45 10h2v5h-2z" fill="#d00" />
      <path d="M40 20h3v5h-3z" fill="#a08040" />
      {/* zoom */}
      <path d="M16 39l-7 7" stroke="#c89850" strokeWidth="5" />
      <circle cx="23" cy="34" r="7.500" fill="#fff" stroke="#222" />
      <path d="M23 28v12M17 34h12M21 30l2-2 2 2M21 38l2 2 2-2M19 32l-2 2 2 2M27 32l2 2-2 2" stroke="#0000d0" />
      {/* previous view */}
      <path d="M25 64c0-4-5-6-9-4v-2l-5 4 5 4v-3" fill="#1030d0" stroke="#1030d0" />
      <path d="M10 70c5-6 10-6 15 0-5 4-10 4-15 0z" fill="#fff" stroke="#000" />
      <circle cx="17.500" cy="69.500" r="2.800" fill="#1818b0" />
      {/* edit */}
      <path d="M28 90l1-5 5-8 3 2-5 8z" fill="#ffe040" stroke="#000" />
      <path d="M33 77l2-2 3 2-1 2z" fill="#d00" />
      <path d="M36 84h10v4H36z" fill="#fff" stroke="#000" strokeDasharray="2 1" />
      <path d="M46 81l5 5-5 5z" fill="#c8a070" stroke="#333" />
      {/* cube views */}
      <g stroke="#000" fill="#fff">
        <path d="M58 17h15v10H58zM58 17l3-3h15l-3 3zM73 17l3-3v10l-3 3z" />
        <path d="M77 39h14v6H77zM77 39l5-6h14l-5 6zM91 39l5-6v6l-5 6z" />
        <path d="M78 65h12v7H78zM78 65l6-6h12l-6 6zM90 65l6-6v6l-6 7z" />
        <path d="M59 84l12-6v14l-12 4zM59 84l-1-2 12-6 5 1v14l-4 1" />
      </g>
      <path d="M62 19h6M65 19v6M83 36h6M88 34l-4 4M84 62h6M88 60l-4 4M63 84l5-2M65 83v8" stroke="#0000e0" />
    </svg>
  );
}

function AxisMarker() {
  return (
    <svg viewBox="0 0 48 48" className="absolute top-[733px] left-[18px] size-12" aria-hidden="true">
      <path d="M7 6c3-4 7-4 10 0 1 3 3 5 3 8-2 3-4 2-4 2v16h12c0-7 5-8 8-5l5 4c5 1 6 8 0 9l-5 4c-4 2-8 0-8-5H16c0 9-9 9-9 0V16c-4 1-6-1-4-4z" fill="#109a30" opacity=".75" />
      <path d="M10 36V14H7l5-9 5 9h-3v22z" fill="#f00" />
      <path d="M14 34h20v-4l9 6-9 5v-3H14z" fill="#0010ff" />
      <circle cx="12" cy="36" r="4.500" fill="#00c020" />
    </svg>
  );
}

/* ---------- taskbar ---------- */

function Taskbar() {
  return (
    <footer className="flex h-[30px] items-center bg-[#020306] text-white">
      <button aria-label="Käynnistä" className="flex w-9 justify-center">
        <Svg w={16} h={16} smooth><path d="M0 2l7-1v6H0zM8 1l8-1v7H8zM0 8h7v7l-7-1zM8 8h8v8l-8-1z" fill="#fff" /></Svg>
      </button>
      <button aria-label="Haku" className="flex w-9 justify-center">
        <Svg w={16} h={16} smooth><circle cx="10" cy="6" r="5" stroke="#fff" strokeWidth="1.300" /><path d="M6.500 9.500L0 16" stroke="#fff" strokeWidth="1.500" /></Svg>
      </button>
      <button aria-label="Tehtävänäkymä" className="flex w-9 justify-center">
        <Svg w={20} h={14}><path d="M4.500.5h11v13h-11zM3 2.500H.5v9H3M17 2.500h2.500v9H17" stroke="#fff" /></Svg>
      </button>
      <button aria-label="Edge" className="flex w-10 justify-center">
        <Svg w={16} h={16} smooth><path d="M0 7C1-2 16-3 16 9H5c0 5 6 5 10 3v3C9 18 1 16 2 9c1-3 3-4 4-4-1 1-1 2-1 2h6c0-5-8-5-11 0z" fill="#0a7bdc" /></Svg>
      </button>
      <button aria-label="Resurssienhallinta" className="ml-[3px] flex h-full w-7 items-center justify-center border-b-2 border-[#76b9ed]">
        <Svg w={16} h={15} smooth><path d="M0 1h6l1 2h9v12H0z" fill="#f8d775" /><path d="M3 15V9h10v6h-3v-3H6v3z" fill="#35a7e8" /></Svg>
      </button>
      <button aria-label="GibbsCAM" className="ml-[5px] flex h-full w-8 items-center justify-center border-b-2 border-[#76b9ed] bg-[#333435] pl-[2px]">
        <GibbsLogo />
      </button>
      <span className="h-full w-1 border-b-2 border-l border-[#76b9ed] border-l-black bg-[#333435]" />
      <div className="ml-auto flex items-center gap-2">
        <Svg w={14} h={8} smooth><path d="M1 7l6-6 6 6" stroke="#fff" strokeWidth="1.300" /></Svg>
        <span className="ml-1"><Svg w={16} h={16} smooth><path d="M4 1l4 3-4 3-3-3zM12 1l3 3-3 3-4-3zM4 7l4 3-4 2-3-2zM12 7l3 2-3 3-4-2z" fill="#fff" /><circle cx="11" cy="11" r="4.500" fill="#2fb457" /><path d="M9 11l1.500 2L13 9" stroke="#fff" /></Svg></span>
        <Svg w={17} h={14}><path d="M6.500 4.500h9v7h-9zM16.500 6v4M1 3h5v3c0 2-4 2-5 0zM2 1v2M5 1v2M3.500 8v3h3" stroke="#fff" /><path d="M8 6h6v4H8z" fill="#bbb" /></Svg>
        <Svg w={16} h={14} smooth><path d="M2 13C2 7 7 2 14 1M5 13c0-5 4-8 9-8M8 13c0-3 3-5 6-5" stroke="#ccc" strokeWidth="1.300" /><circle cx="12" cy="12" r="2" fill="#fff" /></Svg>
        <Svg w={17} h={14} smooth><path d="M1 5h3l4-4v12L4 9H1z" stroke="#fff" /><path d="M10 5q1 2 0 4M12 3q3 4 0 8" stroke="#fff" /><path d="M14 1q4 6 0 12" stroke="#666" /></Svg>
        <Svg w={16} h={16}><path d="M0 0h16v12h-5l-3 4-3-4H0z" fill="#fff" /><path d="M3 3.500h10M3 6.500h10M3 9.500h7" stroke="#000" /></Svg>
        <span className="ml-[6px] w-9 font-[Open_Sans,sans-serif] text-[11px]">FIN</span>
        <span className="w-9 font-[Open_Sans,sans-serif] text-[11px]">14:44</span>
        <span className="mr-1 ml-px h-[30px] w-px bg-[#666]" />
      </div>
    </footer>
  );
}

export default function App() {
  return (
    <div className="flex h-screen flex-col overflow-hidden bg-white">
      <header className="font-[Open_Sans,sans-serif] text-[12px] text-black">
        <div className="flex h-[22px] items-center pl-[3px]">
          <GibbsLogo />
          <h1 className="ml-1 flex-1">DVG_Tuonti.vnc - GibbsCAM</h1>
          <button aria-label="Pienennä" className="flex w-[45px] justify-center"><Svg w={11} h={11}><path d="M0 5.500h11" stroke="#000" /></Svg></button>
          <button aria-label="Palauta" className="flex w-[45px] justify-center"><Svg w={11} h={11}><path d="M.5 2.500h8v8h-8zM2.500 2V.5h8v8H9" stroke="#000" /></Svg></button>
          <button aria-label="Sulje" className="flex w-[49px] justify-center"><Svg w={11} h={11} smooth><path d="M.5.5l10 10M10.500.5l-10 10" stroke="#000" /></Svg></button>
        </div>
        <nav className="flex h-[21px] items-center pl-px">
          {MENU.map((item) => (
            <button key={item} className="px-[6px] leading-4">{item}</button>
          ))}
        </nav>
      </header>

      <main className="flex min-h-0 flex-1 border-t border-[#555] bg-linear-to-br from-[#144066] to-[#0c294b]">
        <aside className="flex shrink-0 flex-col justify-between bg-[#f0f0f0] pb-px">
          <Palette
            count={17}
            activeCount={1}
            tiles={[
              <InsertTile shape={0} id="10" />,
              <InsertTile shape={1} id="12" />,
              <InsertTile shape={1} id="13" />,
              <InsertTile shape={2} id="15" />,
              <InsertTile shape={2} id="14" />,
            ]}
          />
          <Palette count={5} activeCount={1} tiles={[<OperationTile boxed />]} />
        </aside>

        <div className="flex min-w-0 flex-1 flex-col">
          <TopToolbar />
          <div className="relative flex-1">
            <TurnedPart />
            <AxisMarker />
            <div className="absolute top-[717px] left-0 h-[79px] w-[8px] border border-l-0 border-[#4d4d4d] bg-[#d7e3f1] pt-[6px] text-[10px] leading-4 text-black">
              <div className="h-4 border-l border-[#c75050]">e</div>
            </div>
            <ProcessDialog />
            <PluginWindow />
            <SimulationWindow />
            <MachiningWindow />
            <ViewWheel />
          </div>
        </div>

        <aside className="z-10 flex w-[53px] shrink-0 flex-col items-end gap-[2px]">
          <MainTools />
          <Palette count={16} activeCount={1} tiles={[<OperationTile />]} />
          <div className="mt-auto w-[50px] bg-[#f0f0f0] p-[3px]">
            <button aria-label="Roskakori" className="flex h-[22px] w-11 items-center justify-center border border-[#adadad] bg-[#e1e1e1]">
              <Svg w={16} h={16}><path d="M3 1.500h11M2 3.500h13M4.500 4v9.500h8V4M6.500 5v8M8.500 5v8M10.500 5v8M0 12l3 2" stroke="#000" /></Svg>
            </button>
          </div>
        </aside>
      </main>

      <Taskbar />
    </div>
  );
}
